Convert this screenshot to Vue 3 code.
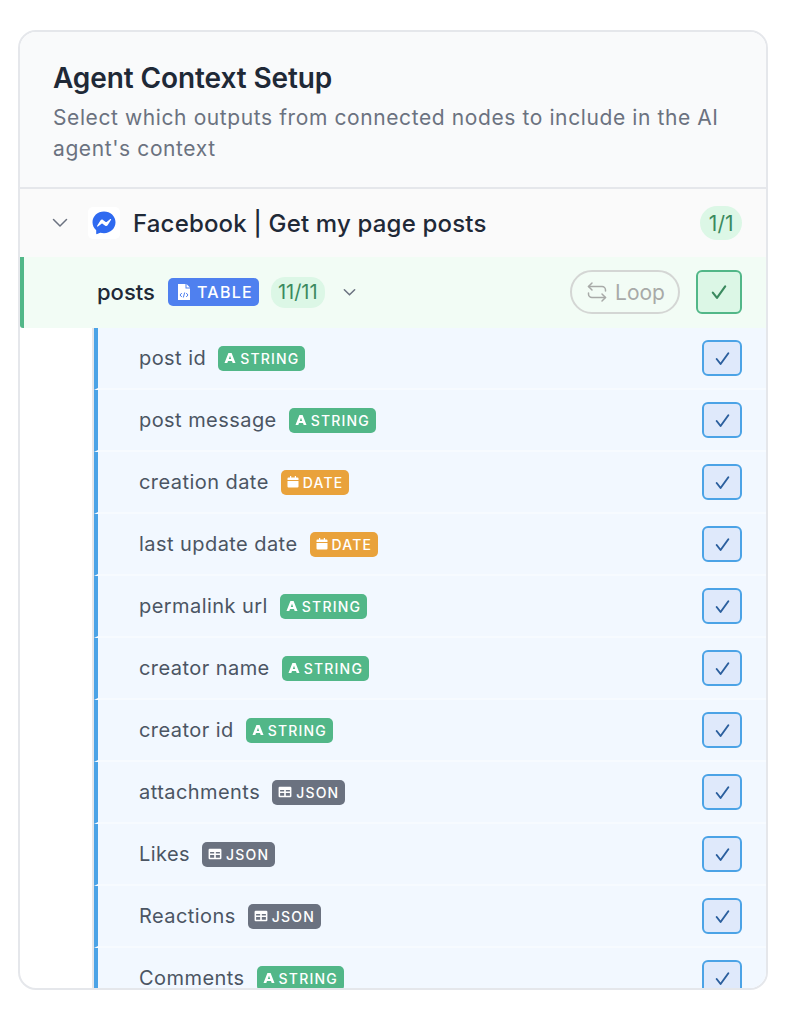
<script setup>
const rows = [
  { name: 'post id', type: 'STRING' },
  { name: 'post message', type: 'STRING' },
  { name: 'creation date', type: 'DATE' },
  { name: 'last update date', type: 'DATE' },
  { name: 'permalink url', type: 'STRING' },
  { name: 'creator name', type: 'STRING' },
  { name: 'creator id', type: 'STRING' },
  { name: 'attachments', type: 'JSON' },
  { name: 'Likes', type: 'JSON' },
  { name: 'Reactions', type: 'JSON' },
  { name: 'Comments', type: 'STRING' }
]
</script>

<template>
  <div class="page">
    <section class="card">
      <header class="head">
        <h1>Agent Context Setup</h1>
        <p>Select which outputs from connected nodes to include in the AI agent's context</p>
      </header>
      <div class="node">
        <svg class="chev" viewBox="0 0 16 16" fill="none" stroke="#6b7280" stroke-width="1.500" stroke-linecap="round" stroke-linejoin="round"><path d="M1.500 4.500 8 11l6.500-6.500"/></svg>
        <span class="logo">
          <svg viewBox="0 0 24 24" width="24" height="24">
            <path fill="#2f6af0" d="M12 .5C5.600.5.500 5.200.500 11.300c0 3.200 1.400 6 3.700 7.900v3.300c0 .5.500.8 1 .6l3-1.400c1.200.3 2.500.5 3.800.5 6.400 0 11.500-4.700 11.500-10.900S18.400.5 12 .5z"/>
            <path fill="#fff" d="M5.100 14.800 8.600 9.300c.5-.8 1.600-1 2.400-.4l2.700 2c.3.2.6.2.9 0l3.700-2.800c.5-.4 1.100.2.800.7l-3.500 5.500c-.5.800-1.600 1-2.400.4l-2.700-2c-.3-.2-.6-.2-.9 0l-3.700 2.800c-.5.400-1.100-.2-.8-.7z"/>
          </svg>
        </span>
        <span class="node-name">Facebook | Get my page posts</span>
        <span class="count node-count">1/1</span>
      </div>
      <div class="output">
        <span class="out-name">posts</span>
        <span class="badge table">
          <svg viewBox="0 0 12 16" width="12" height="16"><path fill="#fff" d="M0 0h7.500v4.500H12V16H0z"/><path fill="#fff" d="M8.500 0 12 3.500H8.500z"/><path fill="none" stroke="#4f80ef" stroke-width="1" d="M3.800 9 2 11l1.800 2M8.200 9 10 11l-1.800 2M6.700 8.500 5.300 13.500"/></svg>
          TABLE
        </span>
        <span class="count">11/11</span>
        <svg class="chev small" viewBox="0 0 16 16" fill="none" stroke="#6b7280" stroke-width="1.600" stroke-linecap="round" stroke-linejoin="round"><path d="M2.500 5 8 10.500 13.500 5"/></svg>
        <span class="loop">
          <svg viewBox="0 0 24 24" width="24" height="24" fill="none" stroke="#a8aaa8" stroke-width="1.500" stroke-linecap="round" stroke-linejoin="round"><path d="M7 3 3.500 6.500 7 10"/><path d="M3.500 6.500H17a3.500 3.500 0 0 1 3.500 3.500v1"/><path d="M17 21l3.500-3.500L17 14"/><path d="M20.500 17.500H7A3.500 3.500 0 0 1 3.500 14v-1"/></svg>
          Loop
        </span>
        <span class="check green">
          <svg viewBox="0 0 16 16" width="18" height="18" fill="none" stroke="#3b8a5f" stroke-width="1.900" stroke-linecap="round" stroke-linejoin="round"><path d="M2.500 8.500 6.200 13.200 13.500 3"/></svg>
        </span>
      </div>
      <div class="fields">
        <div v-for="row in rows" :key="row.name" class="field">
          <span class="field-name">{{ row.name }}</span>
          <span class="badge small-badge" :class="row.type.toLowerCase()">
            <svg v-if="row.type === 'STRING'" viewBox="0 0 12 12" width="12" height="12"><path fill="#fff" fill-rule="evenodd" d="M4.400 1h3.200L11.500 11H8.700L8 9H4l-.7 2H.5zM6 3.700 4.800 7h2.400z"/></svg>
            <svg v-else-if="row.type === 'DATE'" viewBox="0 0 12 12" width="12" height="12"><path fill="#fff" d="M3 0h1.200v1.500h3.600V0H9v1.500h1.500a1 1 0 0 1 1 1V4H.5V2.500a1 1 0 0 1 1-1H3zM.5 5h11v5.500a1 1 0 0 1-1 1h-9a1 1 0 0 1-1-1z"/></svg>
            <svg v-else viewBox="0 0 12 12" width="14" height="14"><path fill="#fff" fill-rule="evenodd" d="M1.500 1.500h9a1 1 0 0 1 1 1v7a1 1 0 0 1-1 1h-9a1 1 0 0 1-1-1v-7a1 1 0 0 1 1-1zm.3 2.700v1.300h3.500V4.200zm4.900 0v1.300h3.500V4.200zM1.800 6.800v2.400h3.500V6.800zm4.900 0v2.400h3.500V6.800z"/></svg>
            {{ row.type }}
          </span>
          <span class="check blue">
            <svg viewBox="0 0 16 16" width="17" height="17" fill="none" stroke="#2b5f9e" stroke-width="1.800" stroke-linecap="round" stroke-linejoin="round"><path d="M2.500 8.500 6.200 13.200 13.500 3"/></svg>
          </span>
        </div>
      </div>
    </section>
  </div>
</template>

<style scoped>
.page {
  width: 786px;
  height: 1010px;
  padding: 30px 18px 20px;
  box-sizing: border-box;
  background: #fff;
  font-family: Inter, "Liberation Sans", sans-serif;
}
.card {
  height: 960px;
  box-sizing: border-box;
  border: 2px solid #e5e7eb;
  border-radius: 18px;
  overflow: hidden;
  display: flex;
  flex-direction: column;
  background: #fff;
}
.head {
  padding: 28px 33px 24px;
  background: #f9fafb;
  border-bottom: 2px solid #e5e7eb;
  height: 157px;
  box-sizing: border-box;
  flex: none;
}
.head h1 {
  margin: 0;
  font-size: 28px;
  line-height: 36px;
  font-weight: 600;
  letter-spacing: -0.100px;
  color: #1f2937;
}
.head p {
  margin: 6px 0 0;
  font-size: 21px;
  line-height: 31px;
  color: #6b7280;
  letter-spacing: 0.600px;
}
.node {
  flex: none;
  height: 68px;
  display: flex;
  align-items: center;
  padding: 0 24px 0 32px;
  background: #fafafa;
}
.chev { width: 16px; height: 16px; }
.logo {
  width: 32px;
  height: 32px;
  margin-left: 20px;
  margin-right: 13px;
  background: #fff;
  border-radius: 5px;
  display: flex;
  align-items: center;
  justify-content: center;
}
.node-name {
  font-size: 24px;
  font-weight: 500;
  letter-spacing: 0.180px;
  color: #1f2937;
}
.count {
  display: inline-flex;
  align-items: center;
  justify-content: center;
  height: 31px;
  padding: 0 7px;
  border-radius: 14px;
  background: #dcf7e6;
  color: #3b8a5f;
  font-size: 20px;
}
.node-count { margin-left: auto; height: 34px; padding: 0 8.500px; border-radius: 17px; font-size: 21px; }
.output {
  flex: none;
  height: 71px;
  box-sizing: border-box;
  display: flex;
  align-items: center;
  padding: 0 24px 1px 73px;
  background: #f2fcf5;
  border-left: 4px solid #52b788;
  border-radius: 0 0 0 3px;
}
.out-name {
  font-size: 22px;
  font-weight: 500;
  color: #1f2937;
  margin-right: 13px;
}
.badge {
  display: inline-flex;
  align-items: center;
  gap: 4px;
  color: #fff;
  font-weight: 500;
  letter-spacing: 1.200px;
  border-radius: 5px;
}
.table {
  height: 28px;
  width: 91px;
  box-sizing: border-box;
  padding: 0 0 0 10px;
  background: #4f80ef;
  font-size: 16px;
  letter-spacing: 1.300px;
  gap: 7px;
  margin-right: 12px;
}
.small.chev { margin-left: 17px; width: 15px; height: 15px; }
.output .count { height: 31px; }
.loop {
  margin-left: auto;
  display: inline-flex;
  align-items: center;
  gap: 6px;
  height: 44px;
  box-sizing: border-box;
  width: 110px;
  justify-content: center;
  border: 2px solid #d4d6d4;
  border-radius: 22px;
  color: #a8aaa8;
  font-size: 21px;
}
.check {
  display: flex;
  align-items: center;
  justify-content: center;
  box-sizing: border-box;
  margin-left: auto;
  border-radius: 6px;
  flex: none;
}
.green {
  width: 46px;
  height: 44px;
  margin-left: 16px;
  border: 2px solid #52b788;
  background: #dcf7e6;
}
.fields {
  flex: 1;
  min-height: 0;
  overflow: hidden;
  margin-left: 72px;
  border-left: 2px solid #e5e7eb;
}
.field {
  height: 62px;
  box-sizing: border-box;
  display: flex;
  align-items: center;
  padding: 0 24px 0 41px;
  background: #f2f8ff;
  border-left: 4px solid #4ba3e6;
  border-bottom: 2px solid #f7fbff;
}
.field-name {
  font-size: 20px;
  color: #4b5563;
  letter-spacing: 0.440px;
  margin-right: 12px;
}
.small-badge {
  height: 25px;
  padding: 0 6px;
  font-size: 14px;
}
.string { background: #52b788; }
.date { background: #e9a23b; }
.json { background: #6b7280; }
.blue {
  width: 40px;
  height: 36px;
  border: 2px solid #4ba3e6;
  background: #dfe9fb;
}
</style>
<style>
html, body { margin: 0; background: #fff; }
</style>
